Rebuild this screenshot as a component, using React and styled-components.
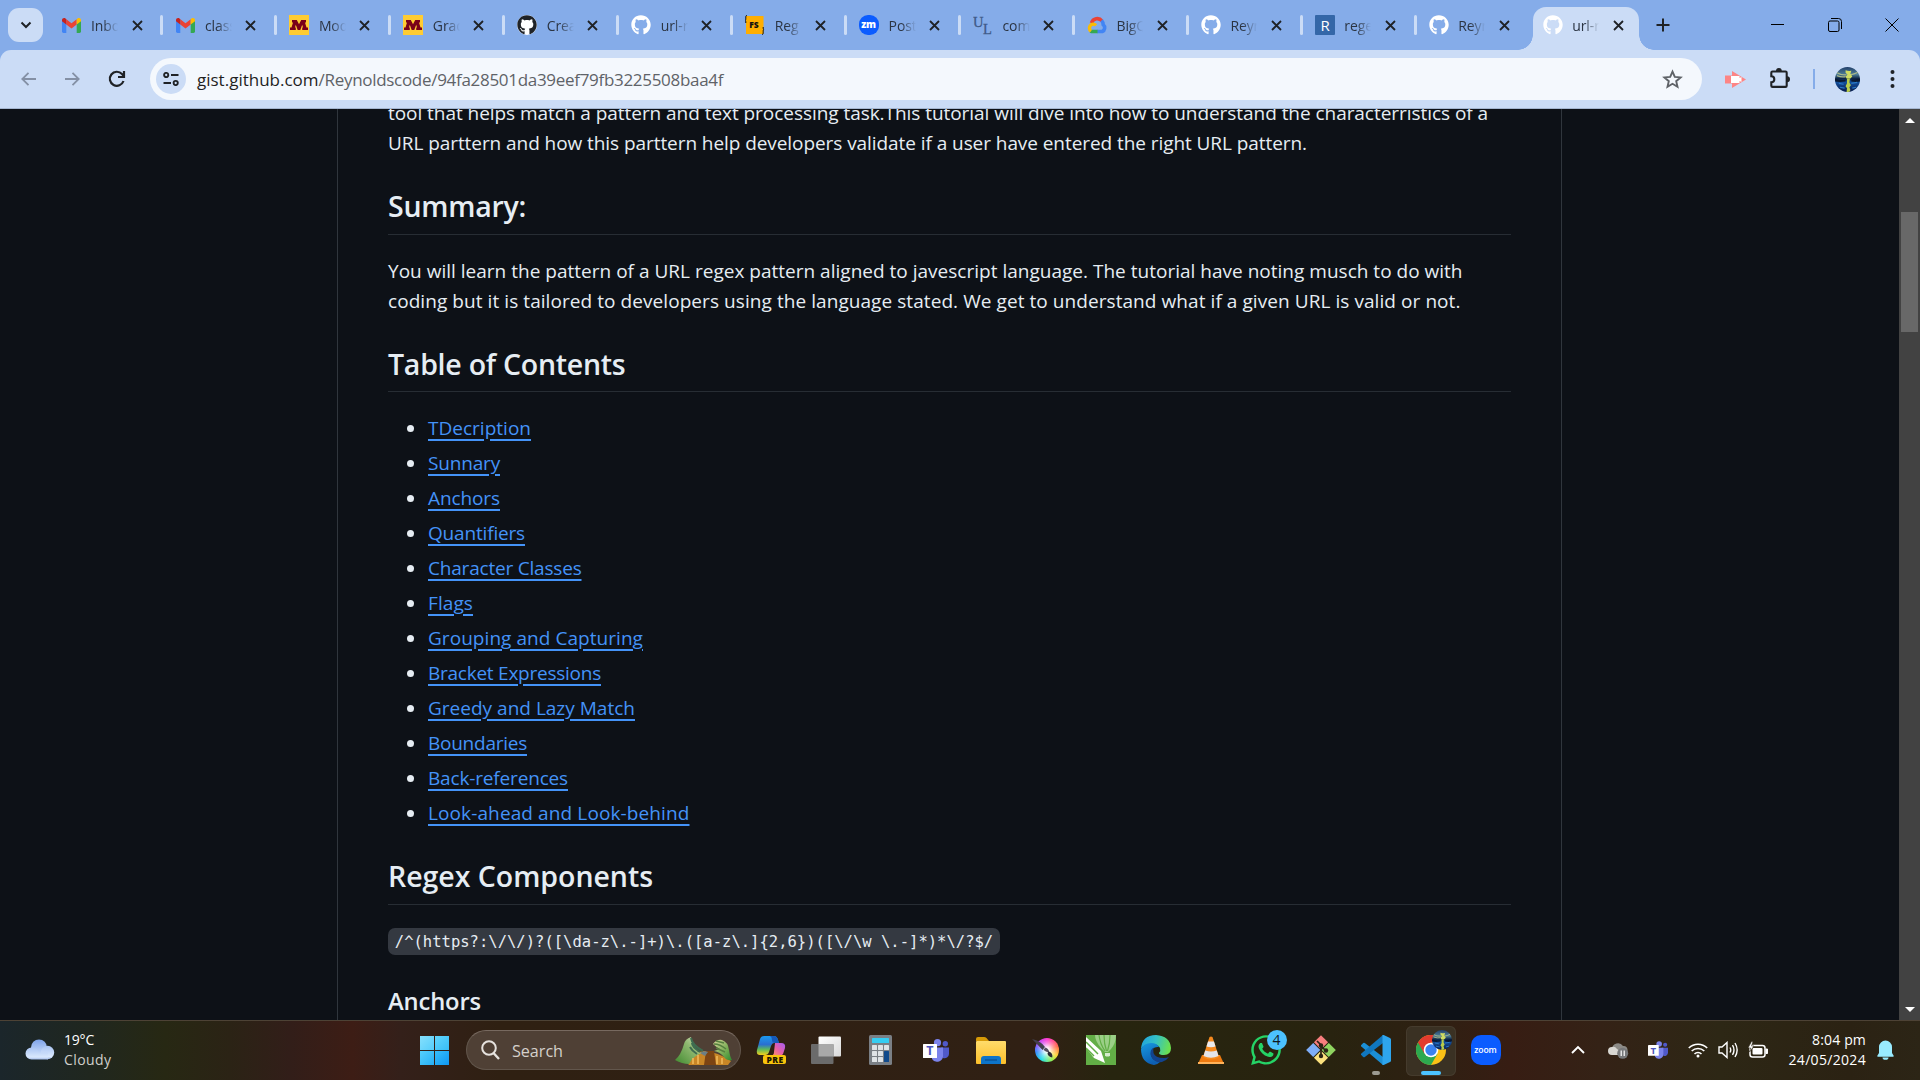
import React from "react";
import styled, { createGlobalStyle, css } from "styled-components";
import { FaGithub, FaWhatsapp } from "react-icons/fa";

const Global = createGlobalStyle`
  * { box-sizing: border-box; }
  body { margin: 0; background: #0d1117; overflow: hidden; }
`;

const ui = `"Open Sans", "Noto Sans", sans-serif`;

const Screen = styled.div`
  display: flex;
  flex-direction: column;
  width: 1920px;
  height: 1080px;
  overflow: hidden;
  font-family: ${ui};
`;

/* ---------- tab strip ---------- */

const TabStrip = styled.header`
  display: flex;
  flex: none;
  height: 50px;
  background: #85ace9;
`;

const TabSearch = styled.button`
  display: grid;
  place-items: center;
  width: 35px;
  height: 34px;
  margin: 8px 6.5px 0 8px;
  padding: 0;
  border: 0;
  border-radius: 11px;
  background: #cbdcf6;
`;

const Tab = styled.div`
  position: relative;
  display: flex;
  align-items: center;
  flex: none;
  width: 113.95px;
  height: 50px;
  padding-left: 12px;
  ${(p) =>
    p.$active
      ? css`
          width: 106px;
          height: 43px;
          margin: 7px 0 0 2px;
          padding: 0 0 7px 10px;
          border-radius: 13px 13px 0 0;
          background: #cbdcf6;
          &::before,
          &::after {
            content: "";
            position: absolute;
            bottom: 0;
            width: 15px;
            height: 15px;
          }
          &::before {
            left: -15px;
            background: radial-gradient(circle at 0 0, transparent 14.5px, #cbdcf6 15px);
          }
          &::after {
            right: -15px;
            background: radial-gradient(circle at 100% 0, transparent 14.5px, #cbdcf6 15px);
          }
        `
      : ""}
`;

const Favicon = styled.span`
  display: grid;
  place-items: center;
  flex: none;
  width: 20px;
  height: 20px;
  color: ${(p) => p.$color || "#fff"};
  border-radius: ${(p) => (p.$disc ? "50%" : "0")};
  background: ${(p) => (p.$disc ? "#fff" : "transparent")};
`;

const TabTitle = styled.span`
  width: 27px;
  margin-left: 9.5px;
  overflow: hidden;
  white-space: nowrap;
  font-size: 14px;
  line-height: 22px;
  padding-top: 1px;
  letter-spacing: -0.1px;
  color: #2b3442;
  mask-image: linear-gradient(90deg, #000 45%, transparent 100%);
`;

const TabClose = styled.span`
  display: grid;
  place-items: center;
  width: 12px;
  height: 12px;
  margin-left: 13px;
`;

const TabSeparator = styled.i`
  width: 3px;
  height: 20px;
  margin-left: auto;
  border-radius: 2px;
  background: #cbdcf6;
`;

const NewTab = styled.div`
  display: grid;
  place-items: center;
  width: 20px;
  margin-left: 14px;
`;

const WindowButtons = styled.div`
  display: flex;
  align-items: center;
  margin-left: auto;
  height: 49px;
`;

const WindowButton = styled.span`
  display: grid;
  place-items: center;
  width: 57px;
  height: 49px;
`;

/* ---------- toolbar ---------- */

const ToolbarBack = styled.div`
  flex: none;
  height: 59px;
  background: #85ace9;
`;

const Toolbar = styled.nav`
  display: flex;
  align-items: center;
  height: 59px;
  padding-left: 10px;
  overflow: hidden;
  border-bottom: 1px solid #a5b6d0;
  border-radius: 11px 11px 0 0;
  background: #cbdcf6;
`;

const NavButton = styled.span`
  display: grid;
  place-items: center;
  flex: none;
  width: ${(p) => p.$w || 45}px;
  color: ${(p) => (p.$off ? "#8490a5" : "#1f2226")};
`;

const Omnibox = styled.div`
  display: flex;
  align-items: center;
  flex: none;
  width: 1552px;
  height: 42px;
  margin-left: 15px;
  padding: 0 19px 0 6px;
  border-radius: 21px;
  background: #f4f8fd;
`;

const SiteInfo = styled.span`
  display: grid;
  place-items: center;
  width: 30px;
  height: 30px;
  border-radius: 50%;
  background: #cbdcf6;
`;

const Url = styled.div`
  flex: 1;
  margin-left: 11px;
  padding-top: 2px;
  font-size: 17px;
  line-height: 24px;
  white-space: pre;
  color: #5f6368;
`;

const Host = styled.span`
  color: #1f1f1f;
`;

const Path = styled.span`
  letter-spacing: -0.3px;
`;

const ToolbarTools = styled.div`
  display: flex;
  align-items: center;
  flex: none;
  padding-left: 21px;
`;

const Divider = styled.i`
  flex: none;
  width: 2px;
  height: 20px;
  margin-right: 20px;
  background: #85ace9;
`;

/* ---------- page ---------- */

const Viewport = styled.main`
  display: flex;
  flex: none;
  height: 911px;
  overflow: hidden;
  background: #0d1117;
`;

const Page = styled.div`
  flex: 1;
  padding-left: 337px;
`;

const Article = styled.article`
  width: 1225px;
  height: 960px;
  margin-top: -11px;
  padding: 0 50px;
  border: solid #30363d;
  border-width: 0 1px;
  font-size: 19px;
  line-height: 30px;
  color: #e6edf3;
`;

const Paragraph = styled.p`
  margin: 0;
`;

const Line = styled.span`
  display: block;
  white-space: nowrap;
  letter-spacing: ${(p) => p.$ls || 0}px;
`;

const Heading = styled.h2`
  margin: 30px 0 ${(p) => p.$after || 21}px;
  padding-bottom: ${(p) => p.$gap || 9}px;
  border-bottom: 1px solid #272d34;
  font-size: 28.5px;
  line-height: 37px;
  font-weight: 600;
  letter-spacing: ${(p) => p.$ls}px;
`;

const SubHeading = styled.h3`
  margin: 31px 0 0;
  font-size: 23.75px;
  line-height: 31px;
  font-weight: 600;
  letter-spacing: -0.141px;
`;

const Contents = styled.ul`
  display: flex;
  flex-direction: column;
  gap: 5px;
  margin: 0 0 30px;
  padding: 0 0 0 19px;
  list-style: none;
`;

const Entry = styled.li`
  display: flex;
  align-items: center;
  height: 30px;
  &::before {
    content: "";
    width: 7px;
    height: 7px;
    margin: 1px 14px 0 0;
    border-radius: 50%;
    background: #e6edf3;
  }
`;

const EntryLink = styled.a`
  color: #4493f8;
  letter-spacing: ${(p) => p.$ls}px;
  text-decoration: underline;
  text-decoration-thickness: 2px;
  text-underline-offset: 4px;
`;

const CodeRow = styled.p`
  display: flex;
  margin: 0;
  height: 30px;
  padding-top: 3px;
`;

const Code = styled.code`
  height: 27px;
  padding: 0 6.8px;
  border-radius: 7px;
  background: #343941;
  font: 15.5px/28px "DejaVu Sans Mono", "Liberation Mono", monospace;
  letter-spacing: 0.018px;
  white-space: pre;
`;

const ScrollTrack = styled.aside`
  display: flex;
  flex-direction: column;
  align-items: center;
  width: 21px;
  background: #424242;
`;

const ScrollArrow = styled.span`
  width: 0;
  height: 0;
  border: 5px solid transparent;
  ${(p) =>
    p.$down
      ? "margin: auto 0 8px; border-top-color: #fff; border-bottom: 0;"
      : "margin-top: 9px; border-bottom-color: #fff; border-top: 0;"}
`;

const ScrollThumb = styled.span`
  width: 17px;
  height: 120px;
  margin-top: 89px;
  background: #686868;
`;

/* ---------- taskbar ---------- */

const Taskbar = styled.footer`
  display: flex;
  align-items: center;
  flex: none;
  height: 60px;
  border-top: 1px solid #4d4235;
  background: linear-gradient(
    90deg,
    #1b262b 0px,
    #20271f 90px,
    #272813 165px,
    #2b2315 230px,
    #321e19 290px,
    #3d1d15 352px,
    #34201a 400px,
    #2f2012 500px,
    #302014 1040px,
    #27250f 1110px,
    #28230f 1330px,
    #2e2012 1430px,
    #371d13 1510px,
    #342216 1600px,
    #2d2715 1720px,
    #2b2213 1850px,
    #2c2516 1920px
  );
  color: #fff;
`;

const Weather = styled.div`
  display: flex;
  align-items: center;
  width: 386px;
  padding: 0 0 2px 24px;
`;

const WeatherText = styled.div`
  display: flex;
  flex-direction: column;
  margin-left: 9px;
  font-size: 14px;
  line-height: 20px;
`;

const Temperature = styled.span`
  letter-spacing: -0.2px;
`;

const Condition = styled.span`
  letter-spacing: 0.4px;
  color: #cfcfcb;
`;

const StartButton = styled.div`
  display: grid;
  grid-template-columns: 14px 14px;
  grid-template-rows: 14px 14px;
  gap: 1px;
  width: 29px;
  margin: 0 17px 0 34px;
`;

const StartPane = styled.i`
  background: linear-gradient(135deg, ${(p) => p.$from}, ${(p) => p.$to});
`;

const SearchBox = styled.div`
  display: flex;
  align-items: center;
  width: 275px;
  height: 40px;
  margin-bottom: 1px;
  padding: 0 7px 0 14px;
  border: 1px solid #62564c;
  border-top-color: #77695f;
  border-radius: 20px;
  background: #4f4035;
`;

const SearchLabel = styled.span`
  flex: 1;
  padding: 1px 0 0 12px;
  font-size: 16.2px;
  letter-spacing: -0.05px;
  color: #d5d0cb;
`;

const Apps = styled.div`
  display: flex;
  margin-left: 2px;
`;

const AppCell = styled.span`
  position: relative;
  display: grid;
  place-items: center;
  width: 50px;
  height: 50px;
  margin: 0 2.5px;
  padding-bottom: 1px;
  border-radius: 6px;
  ${(p) => (p.$active ? "background: #3a3123; box-shadow: inset 0 0 0 1px #453b2d;" : "")}
`;

const RunMark = styled.i`
  position: absolute;
  bottom: 1px;
  left: 50%;
  width: ${(p) => p.$w}px;
  height: 4px;
  border-radius: 2px;
  background: ${(p) => p.$color};
  transform: translateX(-50%);
`;

const Badge = styled.span`
  position: absolute;
  top: 4px;
  right: 4px;
  display: grid;
  place-items: center;
  width: 20px;
  height: 20px;
  border-radius: 50%;
  background: #4cc2ff;
  color: #101820;
  font-size: 14px;
  line-height: 20px;
`;

const ProfileBadge = styled(Badge)`
  background: transparent;
`;

const ZoomTile = styled.span`
  display: grid;
  place-items: center;
  width: 30px;
  height: 30px;
  border-radius: 10px;
  background: #0b5cff;
  font-size: 8.6px;
  line-height: 10px;
  font-weight: 600;
  letter-spacing: -0.1px;
  color: #fff;
`;

const Tray = styled.div`
  display: flex;
  align-items: center;
  margin-left: auto;
  padding: 0 26px 2px 0;
`;

const TrayItem = styled.span`
  display: grid;
  place-items: center;
  width: ${(p) => p.$w}px;
  height: 30px;
`;

const Clock = styled.div`
  display: flex;
  flex-direction: column;
  align-items: flex-end;
  width: 88px;
  margin-right: 11px;
  font-size: 14px;
  line-height: 20px;
`;

const ClockLine = styled.span`
  letter-spacing: ${(p) => p.$ls}px;
`;

/* ---------- drawings ---------- */

const Gmail = () => (
  <svg width="19" height="15" viewBox="0 0 19 15">
    <path d="M0 2.5 4.3 5.6V15H1.4A1.4 1.4 0 0 1 0 13.6z" fill="#4285f4" />
    <path d="M19 2.5 14.7 5.6V15h2.9a1.4 1.4 0 0 0 1.4-1.4z" fill="#34a853" />
    <path d="M4.3 1.2 9.5 5.2l5.2-4v5.3L9.5 10.4 4.3 6.5z" fill="#ea4335" />
    <path d="M0 2.1C0 .2 2.1-.6 3.5.5l.8.7v5.3L0 3.3z" fill="#c5221f" />
    <path d="M19 2.1c0-1.9-2.1-2.7-3.5-1.6l-.8.7v5.3L19 3.3z" fill="#fbbc04" />
  </svg>
);

const Minnesota = () => (
  <svg width="20" height="20" viewBox="0 0 20 20">
    <path d="M0 0h20v20H0z" fill="#ffcc33" />
    <path
      d="M3 5h4.800L10 9.200 12.200 5H17v2.400h-1l1.500 5H19V15h-5.800v-2.600h.8l-.8-2.700L11.300 15H8.700L6.800 9.700 6 12.400h.8V15H1v-2.600h1.500l1.500-5H3z"
      fill="#7a0019"
    />
  </svg>
);

const FsIcon = () => (
  <svg width="20" height="20" viewBox="0 0 20 20">
    <path d="M1 1h17.500v18H1z" fill="#ffae00" />
    <text x="4.2" y="13" fontFamily="Open Sans, sans-serif" fontSize="8.5" fontWeight="800" fill="#111">FS</text>
    <path d="M2 .5C.6.5.8 1.500.8 3S.8 5 0 5.300C.8 5.600.8 6.500.8 8" fill="none" stroke="#111" />
    <path d="M17 19.500c1.300 0 1.200-1.200 1.200-2.700s0-1.800.8-2.100c-.8-.3-.8-1.200-.8-2.700" fill="none" stroke="#111" />
  </svg>
);

const ZmIcon = () => (
  <svg width="20" height="20" viewBox="0 0 20 20">
    <rect width="20" height="20" rx="9" fill="#0b5cff" />
    <text x="2.2" y="13.2" fontFamily="Open Sans, sans-serif" fontSize="10" fontWeight="800" letterSpacing="-.3" fill="#fff">zm</text>
  </svg>
);

const UlIcon = () => (
  <svg width="20" height="20" viewBox="0 0 20 20" fontFamily="Liberation Serif, serif" fontSize="14.5" fill="#3f5a88" stroke="#3f5a88" strokeWidth=".3">
    <text x="0" y="12">U</text>
    <text x="10" y="19">L</text>
  </svg>
);

const CloudIcon = () => (
  <svg width="20" height="20" viewBox="0 0 20 20">
    <path d="M4.500 8A6 6 0 0 1 15 6" fill="none" stroke="#ea4335" strokeWidth="3.6" />
    <path d="M14.500 5.500a6 6 0 0 1 1.700 4.200 4 4 0 0 1-1 6.800H10" fill="none" stroke="#4285f4" strokeWidth="3.6" />
    <path d="M10.500 16.500H5.600a3.500 3.500 0 0 1-2-.6" fill="none" stroke="#34a853" strokeWidth="3.6" />
    <path d="M4 16.200a4 4 0 0 1 2-7.100c1.300-.1 2 .3 3 1.300" fill="none" stroke="#fbbc04" strokeWidth="3.4" />
  </svg>
);

const RIcon = () => (
  <svg width="20" height="20" viewBox="0 0 20 20">
    <rect width="20" height="20" rx="1" fill="#3467a8" />
    <text x="5.4" y="15.5" fontFamily="Open Sans, sans-serif" fontSize="15" fill="#fff">R</text>
  </svg>
);

const Cross = () => (
  <svg width="11" height="11" viewBox="0 0 11 11">
    <path d="M1 1l9 9M10 1l-9 9" stroke="#1f2226" strokeWidth="1.8" />
  </svg>
);

const Globe = ({ size }) => (
  <svg width={size} height={size} viewBox="0 0 26 26">
    <defs>
      <clipPath id={`disc${size}`}>
        <circle cx="13" cy="13" r="13" />
      </clipPath>
      <linearGradient id={`sea${size}`} x1="0" y1="0" x2="0" y2="1">
        <stop offset="0" stopColor="#23406a" />
        <stop offset=".3" stopColor="#4d7d96" />
        <stop offset=".46" stopColor="#0d2545" />
        <stop offset=".6" stopColor="#13509e" />
        <stop offset="1" stopColor="#081a4a" />
      </linearGradient>
    </defs>
    <g clipPath={`url(#disc${size})`}>
      <path d="M0 0h26v26H0z" fill={`url(#sea${size})`} />
      <path d="M0 5q7 4 12 3M26 4q-6 4-10 4M2 9q5 2 9 1" stroke="#a9b88a" strokeWidth="1.2" fill="none" />
      <path d="M11 3.500q3 1 6 .5l-1 3 2 3-2 2-4 0-1-2 2-2-2-2z" fill="#cfdc62" />
      <path d="M0 12q6 2 11 1v2q-6 1-11 0zM26 12q-5 1-9 1v2q5 1 9 0z" fill="#0a1830" />
      <path d="M12.500 12h3l-.5 4 1.500 3-1.500 2 1 3-1 2h-3l.5-4-1.500-2 1.500-3z" fill="#b9cc4a" />
      <path d="M4 17l5 1M17 17l6-1M5 21l5 1M18 22l4-1" stroke="#2a78c4" strokeWidth="1.2" />
    </g>
  </svg>
);

const WeatherCloud = () => (
  <svg width="31" height="22" viewBox="0 0 31 22">
    <defs>
      <linearGradient id="cloudBack" x1="0" y1="0" x2="0" y2="1">
        <stop offset="0" stopColor="#7ea3ea" />
        <stop offset="1" stopColor="#cfe0fb" />
      </linearGradient>
      <linearGradient id="cloudFront" x1="0" y1="0" x2="0" y2="1">
        <stop offset="0" stopColor="#a9c4f3" />
        <stop offset=".8" stopColor="#d9e8fd" />
        <stop offset="1" stopColor="#a3bbe8" />
      </linearGradient>
    </defs>
    <circle cx="15" cy="8.5" r="8" fill="url(#cloudBack)" />
    <circle cx="23.5" cy="13.5" r="6.7" fill="url(#cloudFront)" />
    <path d="M7.500 8.500c4 0 6.500 2 7.500 5l9 0v7H7.500a6 6 0 0 1 0-12z" fill="url(#cloudFront)" />
  </svg>
);

const SearchArt = () => (
  <svg width="58" height="29" viewBox="0 0 58 29">
    <defs>
      <linearGradient id="leafLeft" x1="0" y1="1" x2="1" y2="0">
        <stop offset="0" stopColor="#3f8a2e" />
        <stop offset=".6" stopColor="#8fb870" />
        <stop offset="1" stopColor="#dfe6c8" />
      </linearGradient>
      <linearGradient id="leafRight" x1="0" y1="0" x2="1" y2="1">
        <stop offset="0" stopColor="#d8d59a" />
        <stop offset=".6" stopColor="#75ab52" />
        <stop offset="1" stopColor="#2f8a2e" />
      </linearGradient>
    </defs>
    <path d="M10 24q8-8 19-9 14 1 27 10l-3 4H14z" fill="#c98626" />
    <path d="M31 15h8l2 14H29z" fill="#7c4413" />
    <path d="M0 24Q6 19 9 8q1-5 7-7l2 8q3 3 5 7l4 1q-9 3-13 11-7 0-14-4z" fill="url(#leafLeft)" />
    <path d="M16 2q1 7 12 13M17 7q0 4 8 9M15 11q2 4 7 7" stroke="#3e6c50" strokeWidth="2" fill="none" />
    <path d="M38 8q4-5 9-4 6 2 7 10 1 7 3 10-5 1-8-3-4-5-10-6l6-2q-4-2-7-5z" fill="url(#leafRight)" />
    <path d="M39 8q6 0 12 5M41 12l9 4M41 5l8 2" stroke="#55803f" strokeWidth="1.5" fill="none" />
    <path d="M18 22v6M23 19v9M42 20v8M47 22v6" stroke="#f0b95a" strokeWidth="1.6" />
    <path d="M25 17q4-3 8-1l-3 4z" fill="#6d7f85" />
  </svg>
);

const Copilot = () => (
  <svg width="30" height="30" viewBox="0 0 30 30">
    <defs>
      <linearGradient id="copilotBlue" x1="0" y1="0" x2="0" y2="1">
        <stop offset="0" stopColor="#1b9af0" />
        <stop offset=".45" stopColor="#2a6fd0" />
        <stop offset=".7" stopColor="#5cb85c" />
        <stop offset="1" stopColor="#f5cf1b" />
      </linearGradient>
      <linearGradient id="copilotPink" x1="1" y1="0" x2="0" y2="1">
        <stop offset="0" stopColor="#a35cf5" />
        <stop offset=".5" stopColor="#e65fa8" />
        <stop offset="1" stopColor="#ff9a56" />
      </linearGradient>
    </defs>
    <path d="M8 1h10q3 0 4 4l1 3h-5q-2 0-3 3l-2 6q-1 3-4 3H4q-4 0-3-5L4 4q1-3 4-3z" fill="url(#copilotBlue)" />
    <path d="M14 1h4q3 0 4 4l1 3h-4q-3 0-3-3 0-3-2-4z" fill="#1558b8" />
    <path d="M19 8h6q5 0 4 5l-2 6q-1 2-4 2h-8q3-1 3-4z" fill="url(#copilotPink)" />
    <rect x="7" y="20" width="23" height="9" rx="2" fill="#f8c40c" />
    <text x="10.5" y="27.6" fontFamily="Open Sans, sans-serif" fontSize="8.5" fontWeight="800" letterSpacing=".4" fill="#1b1500">PRE</text>
  </svg>
);

const TaskView = () => (
  <svg width="30" height="28" viewBox="0 0 30 28">
    <defs>
      <linearGradient id="sheet" x1="0" y1="0" x2="1" y2="1">
        <stop offset="0" stopColor="#fff" />
        <stop offset="1" stopColor="#d9d9d9" />
      </linearGradient>
    </defs>
    <rect x="7.5" y=".5" width="22.5" height="20" rx="1" fill="url(#sheet)" />
    <rect x="0" y="8" width="22.5" height="20" rx="1" fill="#6b6b6b" />
    <path d="M7.500 8h15v12.500h-15z" fill="#a9a9a9" />
  </svg>
);

const Calculator = () => (
  <svg width="23" height="30" viewBox="0 0 23 30">
    <rect width="23" height="30" rx="1.5" fill="#7a7f85" />
    <rect x="3" y="3" width="17" height="5" rx=".6" fill="#35cdf2" />
    {[10, 16, 22].map((y) =>
      [3, 9].map((x) => <rect key={`${x}${y}`} x={x} y={y} width="5" height="5" rx=".6" fill="#dfe3e6" />)
    )}
    <rect x="15" y="10" width="5" height="5" rx=".6" fill="#dfe3e6" />
    <rect x="15" y="16" width="5" height="11" rx=".6" fill="#114a8b" />
  </svg>
);

const Teams = ({ w, h }) => (
  <svg width={w} height={h} viewBox="0 0 26 23">
    <circle cx="22.3" cy="4.7" r="2.7" fill="#5059c9" />
    <path d="M18 8.500h8V15a4.500 4.500 0 0 1-6 4z" fill="#5059c9" />
    <circle cx="14.5" cy="3.7" r="3.6" fill="#7b83eb" />
    <path d="M9 8.500h11V16a6 6 0 0 1-11 4z" fill="#7b83eb" />
    <rect x="0" y="5" width="14" height="14" rx=".5" fill="#fff" />
    <text x="3.3" y="16.2" fontFamily="Open Sans, sans-serif" fontSize="12.5" fontWeight="700" fill="#4b53bc">T</text>
  </svg>
);

const Explorer = () => (
  <svg width="30" height="27" viewBox="0 0 30 27">
    <defs>
      <linearGradient id="folder" x1="0" y1="0" x2="0" y2="1">
        <stop offset="0" stopColor="#ffdc6b" />
        <stop offset="1" stopColor="#fcbf2a" />
      </linearGradient>
    </defs>
    <path d="M0 2q0-2 2-2h6q1.500 0 2.500 1l2.500 3H0z" fill="#d79a07" />
    <path d="M0 5q0-1 1-1h28q1 0 1 1v21q0 1-1 1H1q-1 0-1-1z" fill="url(#folder)" />
    <path d="M5 27v-5q0-3 3-3h14q3 0 3 3v5z" fill="#0d74c9" />
    <path d="M9 23h12" stroke="#0a4f92" strokeWidth="1.3" />
  </svg>
);

const KritaWheel = styled.span`
  position: relative;
  width: 24px;
  height: 24px;
  margin-left: 3px;
  border-radius: 50%;
  background: radial-gradient(circle, rgba(255, 255, 255, 0.95) 2px, rgba(255, 255, 255, 0.35) 7px, transparent 11px),
    conic-gradient(#ff3bd4, #ff6a4d 70deg, #ffd83b 120deg, #9df04a 150deg, #28e0e8 210deg, #3a8cff 260deg, #b94bff 310deg, #ff3bd4);
`;

const KritaBrush = styled.svg`
  position: absolute;
  top: 0;
  left: -3px;
`;

const Krita = () => (
  <KritaWheel>
    <KritaBrush width="24" height="22" viewBox="0 0 24 22">
      <path d="M0 1q9 2 13 8l-2.500 3Q6 7 0 1z" fill="#44404e" />
      <path d="M13.500 9.500q3 1 4 5l-2.500-.5q-2.500-1-3.500-2.500z" fill="#55515f" />
      <path d="M16.500 13.500q4.500 1 3.800 6-4.300-1-4.800-4z" fill="#2b2a36" />
    </KritaBrush>
  </KritaWheel>
);

const Corel = () => (
  <svg width="30" height="30" viewBox="0 0 30 30">
    <path d="M0 0h30v30H0z" fill="#62ae46" />
    <path d="M9 0h21q0 8-5 14l-3 3h-3l-4-4Q9 6 9 0z" fill="#9bcf87" />
    <path d="M13 0q1 9 6 16M18 0q0 9 2.500 16M24 0q0 9-2.500 16" stroke="#62ae46" strokeWidth="1.2" fill="none" />
    <path d="M19 18h5v2.500l-1 1h-3l-1-1z" fill="#d4ebcb" />
    <path d="M0 2l15 14 4 12-11-5-8-10z" fill="#fff" />
    <path d="M0 7l12 12M0 13l8 8" stroke="#62ae46" strokeWidth="1.5" />
  </svg>
);

const Edge = () => (
  <svg width="30" height="30" viewBox="0 0 30 30">
    <defs>
      <linearGradient id="edgeTop" x1="0" y1=".2" x2="1" y2=".4">
        <stop offset="0" stopColor="#1fa2e0" />
        <stop offset=".5" stopColor="#35c1c4" />
        <stop offset="1" stopColor="#6be04f" />
      </linearGradient>
      <linearGradient id="edgeSide" x1="0" y1="0" x2=".4" y2="1">
        <stop offset="0" stopColor="#1799e0" />
        <stop offset="1" stopColor="#0d5fb3" />
      </linearGradient>
    </defs>
    <path d="M0 14Q1 0 15 0q14 1 15 13 0 7-7 7-5 0-5-2 2-2 1-5-2-4-8-4Q3 9 0 14z" fill="url(#edgeTop)" />
    <path d="M0 14q3-6 10-6 6 0 8 4-7-1-8 6 0 8 9 9-3 3-6 3Q0 28 0 14z" fill="url(#edgeSide)" />
    <path d="M12.500 12.500Q8 16 10 21q3 7 11 6 4-1 7-5-2 1-5 1-9 0-10.500-5-.5-3 0-5.500z" fill="#12438e" />
  </svg>
);

const Vlc = () => (
  <svg width="26" height="28" viewBox="0 0 26 28">
    <path d="M4 19h18l4 9H0z" fill="#ee7a10" />
    <path d="M0 26h26v2H0z" fill="#ffb258" />
    <path d="M11.500 1q1.500-1 3 0L21 21q-8 5-16 0z" fill="#f58a1f" />
    <path d="M10 5.500h6l1.500 5q-4.500 1.500-9 0z" fill="#e9eaee" />
    <path d="M7.200 14.500q5.800 2 11.600 0l1.700 5.500q-7.500 3.500-15 0z" fill="#e3e4ea" />
  </svg>
);

const GitIcon = () => (
  <svg width="30" height="30" viewBox="0 0 30 30">
    <g transform="rotate(45 15 15)">
      <rect x="4.5" y="4.5" width="10" height="10" fill="#f77e7e" />
      <rect x="15.5" y="4.5" width="10" height="10" fill="#8fd460" />
      <rect x="4.5" y="15.5" width="10" height="10" fill="#7eaef7" />
      <rect x="15.5" y="15.5" width="10" height="10" fill="#fbe27e" />
    </g>
    <path d="M11 6l4 4v12M15 11l5 5" stroke="#2b2215" strokeWidth="1.7" fill="none" />
    <circle cx="15" cy="10.5" r="2.2" fill="#2b2215" />
    <circle cx="20" cy="15.5" r="2.2" fill="#2b2215" />
    <circle cx="15" cy="21" r="2.2" fill="#2b2215" />
  </svg>
);

const VsCode = () => (
  <svg width="30" height="30" viewBox="0 0 30 30">
    <path d="M0 10.300l2.200-2.200q.8-.5 1.600 0L22 22v8L.3 11.500q-.5-.600-.3-1.200z" fill="#1b8fd6" />
    <path d="M0 19.700l2.200 2.200q.8.500 1.600 0L22 8V0L.3 18.500q-.5.600-.3 1.200z" fill="#1077bf" />
    <path d="M21.500 0q.6-.2 1.200.1L29 3q1 .6 1 1.600v20.800q0 1-1 1.600l-6.300 2.900q-.6.300-1.200.1z" fill="#2ea5ee" />
  </svg>
);

const Chrome = () => (
  <svg width="30" height="30" viewBox="0 0 30 30">
    <circle cx="15" cy="15" r="15" fill="#fbc116" />
    <path d="M15 15L2 7.500A15 15 0 0 0 15 30l6.500-11.200z" fill="#2da94f" />
    <path d="M2 7.500A15 15 0 0 1 28 7.500H15L8.500 18.700z" fill="#e33b2e" />
    <circle cx="15" cy="15" r="7.3" fill="#fff" />
    <circle cx="15" cy="15" r="5.7" fill="#3a82f0" />
  </svg>
);

/* ---------- content ---------- */

const tabs = [
  ["Inbox", <Gmail />],
  ["class", <Gmail />],
  ["Mod", <Minnesota />],
  ["Grad", <Minnesota />],
  ["Crea", <FaGithub size={20} />, "#1f2328", true],
  ["url-r", <FaGithub size={20} />],
  ["Reg", <FsIcon />],
  ["Post", <ZmIcon />],
  ["com", <UlIcon />],
  ["BigQ", <CloudIcon />],
  ["Reyn", <FaGithub size={20} />],
  ["rege", <RIcon />],
  ["Reyn", <FaGithub size={20} />],
  ["url-r", <FaGithub size={20} />],
];

const entries = [
  ["TDecription", 0.013],
  ["Sunnary", -0.174],
  ["Anchors", -0.096],
  ["Quantifiers", -0.172],
  ["Character Classes", -0.2],
  ["Flags", 0.094],
  ["Grouping and Capturing", 0.051],
  ["Bracket Expressions", -0.246],
  ["Greedy and Lazy Match", 0.01],
  ["Boundaries", -0.248],
  ["Back-references", -0.163],
  ["Look-ahead and Look-behind", 0.114],
];

const pattern = "/^(https?:\\/\\/)?([\\da-z\\.-]+)\\.([a-z\\.]{2,6})([\\/\\w \\.-]*)*\\/?$/";

function Tabs() {
  return (
    <TabStrip>
      <TabSearch>
        <svg width="12" height="8" viewBox="0 0 12 8">
          <path d="M1.500 1.500L6 6l4.500-4.500" fill="none" stroke="#1f2226" strokeWidth="2" />
        </svg>
      </TabSearch>
      {tabs.map(([title, icon, color, disc], i) => (
        <Tab key={i} $active={i === 13}>
          <Favicon $color={color} $disc={disc}>{icon}</Favicon>
          <TabTitle>{title}</TabTitle>
          <TabClose><Cross /></TabClose>
          {i < 12 && <TabSeparator />}
        </Tab>
      ))}
      <NewTab>
        <svg width="14" height="14" viewBox="0 0 14 14">
          <path d="M7 .5v13M.5 7h13" stroke="#1f2226" strokeWidth="2" />
        </svg>
      </NewTab>
      <WindowButtons>
        <WindowButton>
          <svg width="13" height="13" viewBox="0 0 13 13"><path d="M0 6.500h13" stroke="#000" /></svg>
        </WindowButton>
        <WindowButton>
          <svg width="14" height="14" viewBox="0 0 14 14" fill="none" stroke="#000">
            <rect x=".5" y="3" width="10.5" height="10.5" rx="1.5" />
            <path d="M3 .5h7.500a3 3 0 0 1 3 3V11" />
          </svg>
        </WindowButton>
        <WindowButton>
          <svg width="14" height="14" viewBox="0 0 14 14"><path d="M.5.500l13 13M13.500.500l-13 13" stroke="#000" /></svg>
        </WindowButton>
      </WindowButtons>
    </TabStrip>
  );
}

function AddressBar() {
  return (
    <ToolbarBack>
      <Toolbar>
        <NavButton $off $w={36}>
          <svg width="15" height="14" viewBox="0 0 15 14" fill="none" stroke="currentColor" strokeWidth="1.8">
            <path d="M15 7H1.500M7.500.800L1.300 7l6.200 6.200" />
          </svg>
        </NavButton>
        <NavButton $off $w={53}>
          <svg width="15" height="14" viewBox="0 0 15 14" fill="none" stroke="currentColor" strokeWidth="1.8">
            <path d="M0 7h13.500M7.500.800L13.700 7l-6.200 6.200" />
          </svg>
        </NavButton>
        <NavButton $w={36}>
          <svg width="18" height="18" viewBox="0 0 18 18" fill="none" stroke="currentColor" strokeWidth="2.2">
            <path d="M15.500 11A7 7 0 1 1 14 4l1.500 1.700" />
            <path d="M16 1v6h-6" />
          </svg>
        </NavButton>
        <Omnibox>
          <SiteInfo>
            <svg width="16" height="14" viewBox="0 0 16 14" fill="none" stroke="#1f2226" strokeWidth="1.9">
              <circle cx="3.2" cy="3" r="2.1" />
              <path d="M8 3h7.500M.5 11H8" />
              <circle cx="12.7" cy="11" r="2.1" />
            </svg>
          </SiteInfo>
          <Url>
            <Host>gist.github.com</Host>
            <Path>/Reynoldscode/94fa28501da39eef79fb3225508baa4f</Path>
          </Url>
          <svg width="21" height="20" viewBox="0 0 21 20">
            <path d="M10.500 2.600l2.300 5.300 5.800.5-4.400 3.800 1.300 5.600-5-3-5 3 1.300-5.600-4.400-3.800 5.800-.5z" fill="none" stroke="#5f6368" strokeWidth="1.9" />
          </svg>
        </Omnibox>
        <ToolbarTools>
          <NavButton $w={24}>
            <svg width="21" height="17" viewBox="0 0 21 17">
              <path d="M7 0l14 8.500L7 17z" fill="#fd8585" />
              <path d="M0 4.500h7v8H0z" fill="#fd8585" />
              <path d="M6 5h8.500v2l2-1v5l-2-1v2H6z" fill="#fff" />
            </svg>
          </NavButton>
          <NavButton $w={66}>
            <svg width="22" height="22" viewBox="0 0 22 22">
              <path d="M3.500 3.500h13q1.200 0 1.200 1.200v13q0 1.200-1.200 1.200h-13q-1.200 0-1.200-1.200v-3.500a2.900 2.900 0 0 0 0-6V4.700q0-1.200 1.200-1.200z" fill="none" stroke="#1f2226" strokeWidth="2.1" />
              <path d="M7 3a2.900 2.900 0 0 1 5.800 0zM18 8.200a3 3 0 0 1 0 6z" fill="#1f2226" />
            </svg>
          </NavButton>
          <Divider />
          <Globe size={25} />
          <NavButton $w={65}>
            <svg width="5" height="20" viewBox="0 0 5 20" fill="#1f2226">
              <circle cx="2.5" cy="3" r="2" />
              <circle cx="2.5" cy="10" r="2" />
              <circle cx="2.5" cy="17" r="2" />
            </svg>
          </NavButton>
        </ToolbarTools>
      </Toolbar>
    </ToolbarBack>
  );
}

function Gist() {
  return (
    <Viewport>
      <Page>
        <Article>
          <Paragraph>
            <Line $ls={-0.048}>
              tool that helps match a pattern and text processing task.This tutorial will dive into how to understand the characterristics of a
            </Line>
            <Line $ls={-0.067}>
              URL parttern and how this parttern help developers validate if a user have entered the right URL pattern.
            </Line>
          </Paragraph>
          <Heading $ls={-0.258}>Summary:</Heading>
          <Paragraph>
            <Line $ls={0.011}>
              You will learn the pattern of a URL regex pattern aligned to javescript language. The tutorial have noting musch to do with
            </Line>
            <Line $ls={0.068}>
              coding but it is tailored to developers using the language stated. We get to understand what if a given URL is valid or not.
            </Line>
          </Paragraph>
          <Heading $ls={-0.251} $gap={8}>Table of Contents</Heading>
          <Contents>
            {entries.map(([label, ls]) => (
              <Entry key={label}>
                <EntryLink $ls={ls}>{label}</EntryLink>
              </Entry>
            ))}
          </Contents>
          <Heading $ls={-0.032} $after={20}>Regex Components</Heading>
          <CodeRow>
            <Code>{pattern}</Code>
          </CodeRow>
          <SubHeading>Anchors</SubHeading>
        </Article>
      </Page>
      <ScrollTrack>
        <ScrollArrow />
        <ScrollThumb />
        <ScrollArrow $down />
      </ScrollTrack>
    </Viewport>
  );
}

function Dock() {
  return (
    <Taskbar>
      <Weather>
        <WeatherCloud />
        <WeatherText>
          <Temperature>19°C</Temperature>
          <Condition>Cloudy</Condition>
        </WeatherText>
      </Weather>
      <StartButton>
        <StartPane $from="#86e0fd" $to="#55cdfb" />
        <StartPane $from="#62d6fd" $to="#37bdf8" />
        <StartPane $from="#55d0fd" $to="#27aff6" />
        <StartPane $from="#37bffb" $to="#0f97f2" />
      </StartButton>
      <SearchBox>
        <svg width="19" height="20" viewBox="0 0 19 20" fill="none" stroke="#e6e2de" strokeWidth="2">
          <circle cx="8" cy="8" r="6.8" />
          <path d="M12.500 13l5.500 6" strokeWidth="2.4" />
        </svg>
        <SearchLabel>Search</SearchLabel>
        <SearchArt />
      </SearchBox>
      <Apps>
        <AppCell><Copilot /></AppCell>
        <AppCell><TaskView /></AppCell>
        <AppCell><Calculator /></AppCell>
        <AppCell><Teams w={26} h={23} /></AppCell>
        <AppCell><Explorer /></AppCell>
        <AppCell><Krita /></AppCell>
        <AppCell><Corel /></AppCell>
        <AppCell><Edge /></AppCell>
        <AppCell><Vlc /></AppCell>
        <AppCell>
          <FaWhatsapp size={34} color="#25d366" />
          <Badge>4</Badge>
        </AppCell>
        <AppCell><GitIcon /></AppCell>
        <AppCell>
          <VsCode />
          <RunMark $w={8} $color="#9b9a91" />
        </AppCell>
        <AppCell $active>
          <Chrome />
          <ProfileBadge><Globe size={20} /></ProfileBadge>
          <RunMark $w={20} $color="#4cc2ff" />
        </AppCell>
        <AppCell><ZoomTile>zoom</ZoomTile></AppCell>
      </Apps>
      <Tray>
        <TrayItem $w={40}>
          <svg width="14" height="9" viewBox="0 0 14 9">
            <path d="M1 8l6-6 6 6" fill="none" stroke="#fff" strokeWidth="1.9" />
          </svg>
        </TrayItem>
        <TrayItem $w={40}>
          <svg width="21" height="18" viewBox="0 0 21 18">
            <path d="M4 8a6 6 0 0 1 11-3 4 4 0 0 1 1 8H4z" fill="#8c8a86" />
            <path d="M4 6q3-1 5 2l6 4v2H4a4 4 0 0 1 0-8z" fill="#d9d7d2" />
            <circle cx="14.7" cy="12.3" r="5.5" fill="#77787a" />
            <path d="M13.200 9.500v5.600M16.200 9.500v5.600" stroke="#fff" strokeWidth="1.2" />
          </svg>
        </TrayItem>
        <TrayItem $w={40}><Teams w={20} h={18} /></TrayItem>
        <TrayItem $w={40}>
          <svg width="20" height="16" viewBox="0 0 20 16" fill="none" stroke="#fff" strokeWidth="1.6">
            <path d="M.8 6a13 13 0 0 1 18.400 0M3.700 9a9 9 0 0 1 12.600 0M6.500 12a5 5 0 0 1 7 0" />
            <circle cx="10" cy="14" r="1.5" fill="#fff" stroke="none" />
          </svg>
        </TrayItem>
        <TrayItem $w={20}>
          <svg width="20" height="18" viewBox="0 0 20 18" fill="none" stroke="#fff" strokeWidth="1.4">
            <path d="M1 6h3l5-4.500v15L4 12H1z" />
            <path d="M12 6.500q1.500 2.500 0 5M14.500 4.200q3 4.800 0 9.600M17 2q4.300 7 0 14" />
          </svg>
        </TrayItem>
        <TrayItem $w={40}>
          <svg width="21" height="18" viewBox="0 0 21 18">
            <rect x="2" y="4.5" width="15" height="11.5" rx="2.5" fill="none" stroke="#fff" strokeWidth="1.5" />
            <rect x="4.5" y="7" width="10" height="6.5" rx="1" fill="#fff" />
            <path d="M18 8h1.500v4.500H18z" fill="#fff" stroke="#fff" />
            <path d="M3.500.500L0 7h2.700L1.500 11 6 5H3.500L5 .5z" fill="#fff" stroke="#2d2715" strokeWidth=".6" />
          </svg>
        </TrayItem>
        <Clock>
          <ClockLine $ls={0.16}>8:04 pm</ClockLine>
          <ClockLine $ls={0.32}>24/05/2024</ClockLine>
        </Clock>
        <svg width="17" height="20" viewBox="0 0 17 20" fill="#99ebff">
          <path d="M2 13V7a6.500 6.500 0 0 1 13 0v6l1.700 2.700q.3 1-.7 1H1q-1 0-.7-1z" />
          <path d="M5.500 17.500h6a3 2.300 0 0 1-6 0z" />
        </svg>
      </Tray>
    </Taskbar>
  );
}

export default function App() {
  return (
    <Screen>
      <Global />
      <Tabs />
      <AddressBar />
      <Gist />
      <Dock />
    </Screen>
  );
}
